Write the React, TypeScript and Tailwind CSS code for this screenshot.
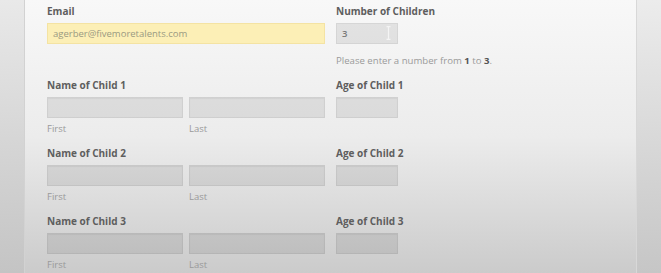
import React from "react";

const font = { fontFamily: '"Open Sans", "Noto Sans", sans-serif' };

function Label({ children }: { children: React.ReactNode }) {
  return (
    <div className="h-[12px] text-[10px] leading-[12px] font-bold text-[#5e5e5e] mb-[6px] whitespace-nowrap">
      {children}
    </div>
  );
}

function Box({ className = "" }: { className?: string }) {
  return (
    <div
      className={
        "h-[21px] bg-black/[0.08] border border-black/[0.05] shadow-[inset_0_1px_1px_rgba(0,0,0,0.05)] " +
        className
      }
    />
  );
}

function Sub({ children }: { children: React.ReactNode }) {
  return (
    <div className="h-[12px] mt-[5px] text-[9.5px] leading-[12px] text-[#9a9a9a]">{children}</div>
  );
}

function ChildRow({ n }: { n: number }) {
  return (
    <div className="grid grid-cols-[278px_62px] gap-x-[11px] mt-[12px]">
      <div>
        <Label>Name of Child {n}</Label>
        <div className="flex gap-[6px]">
          <div className="flex-1">
            <Box />
            <Sub>First</Sub>
          </div>
          <div className="flex-1">
            <Box />
            <Sub>Last</Sub>
          </div>
        </div>
      </div>
      <div>
        <Label>Age of Child {n}</Label>
        <Box />
      </div>
    </div>
  );
}

export default function App() {
  return (
    <div className="flex w-[661px] h-[273px] overflow-hidden" style={font}>
      <div className="w-[25px] bg-gradient-to-b from-[#e9e9e9] to-[#c4c4c4] border-r border-[#d2d2d2]" />
      <div className="flex-1 bg-gradient-to-b from-[#f8f8f8] via-[#ececec] to-[#cbcbcb] pl-[22px] pt-[5px]">
        <div className="grid grid-cols-[278px_62px] gap-x-[11px]">
          <div>
            <Label>Email</Label>
            <div className="h-[21px] bg-[#fcefb6] border border-[#f4e3a3] pl-[5px] text-[9.5px] leading-[19px] text-[#9a9a82]">
              agerber@fivemoretalents.com
            </div>
          </div>
          <div>
            <Label>Number of Children</Label>
            <div className="relative h-[21px] bg-black/[0.08] border border-black/[0.05] pl-[5px] text-[9.5px] leading-[19px] text-[#7a7a7a] font-semibold">
              3
              <svg
                className="absolute right-[6px] top-[2px]"
                width="5"
                height="14"
                viewBox="0 0 5 14"
                fill="none"
                stroke="#f4f4f4"
                strokeWidth="1.2"
              >
                <path d="M0.5 0.7 H4.5 M2.5 0.7 V13.3 M0.5 13.3 H4.5" />
              </svg>
            </div>
            <div className="mt-[11px] h-[12px] text-[9.6px] leading-[12px] text-[#9a9a9a] whitespace-nowrap">
              Please enter a number from <b className="text-[#555]">1</b> to <b className="text-[#555]">3</b>.
            </div>
          </div>
        </div>
        <ChildRow n={1} />
        <ChildRow n={2} />
        <ChildRow n={3} />
      </div>
      <div className="w-[25px] bg-gradient-to-b from-[#ececec] to-[#c6c6c6] border-l border-[#d8d8d8]" />
    </div>
  );
}
